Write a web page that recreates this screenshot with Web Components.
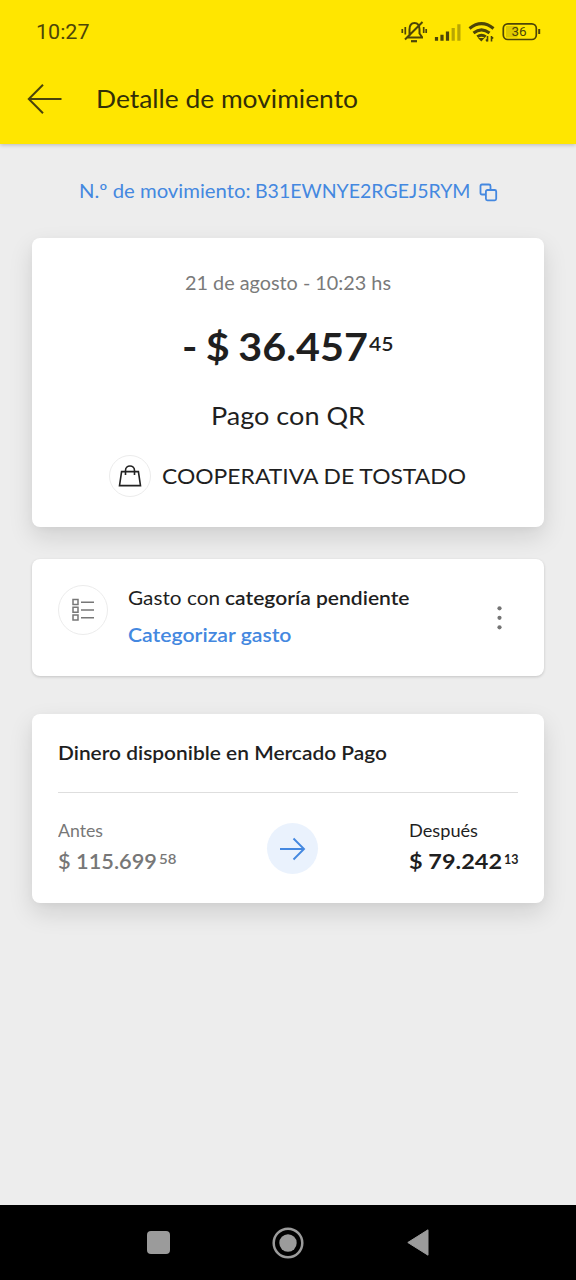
<!DOCTYPE html>
<html lang="es">
<head>
<meta charset="utf-8">
<title>Detalle de movimiento</title>
<style>
body { margin: 0; background: #ededed; font-family: Lato, "Open Sans", sans-serif; color: #1f1f1f; }
</style>
</head>
<body>
<mp-screen></mp-screen>
<script>
const define = (name, html, setup) => {
  const tpl = document.createElement('template');
  tpl.innerHTML = html;
  customElements.define(name, class extends HTMLElement {
    constructor() {
      super();
      this.attachShadow({ mode: 'open' }).appendChild(tpl.content.cloneNode(true));
    }
    connectedCallback() { if (setup) setup(this); }
  });
};

// Single line of text: size, line height, and a measure the glyph widths adapt to.
define('mp-text', `
<style>
:host { display: block; white-space: nowrap; flex: none; }
span { display: inline-block; vertical-align: top; transform-origin: 0 50%; }
</style><span><slot></slot></span>`, el => {
  const w = +el.getAttribute('w');
  const lh = (el.getAttribute('lh') || 24) + 'px';
  el.style.fontSize = el.getAttribute('size') + 'px';
  el.style.lineHeight = lh;
  el.style.height = lh;
  const span = el.shadowRoot.querySelector('span');
  const natural = span.getBoundingClientRect().width;
  if (w && natural) {
    el.style.width = w + 'px';
    span.style.transform = 'scaleX(' + (w / natural).toFixed(4) + ')';
  }
});

define('mp-status-bar', `
<style>
:host { display: flex; height: 64px; align-items: center; padding: 0 35px 0 36px; color: #4d4508; font-family: Roboto, sans-serif; box-sizing: border-box; }
.icons { margin-left: auto; display: flex; align-items: center; }
svg { display: block; }
</style>
<mp-text size="21" w="53.5">10:27</mp-text>
<div class="icons">
<svg width="140" height="28" viewBox="401 17 140 28" fill="none" stroke="#4d4508" stroke-width="2">
  <path d="M407.500 36.500h13M409.500 35v-6.500c0-4 2-6.500 5-6.500 3 0 5 2.500 5 6.500v4l2.500 3.500v.5h-4M405 38.500L422.500 21"/>
  <path d="M411 40.200h6" stroke-width="2.200"/>
  <path d="M405.300 26v7.500M402.300 28v4M423.700 26v6M426.200 28v4" stroke-width="1.700"/>
  <g stroke-width="3.200"><path d="M436.500 36v3.700M442 33.700v6M447.500 30.500v9.200"/><path d="M453.200 27v12.700M458.900 23.300v16.400" opacity=".4"/></g>
  <g stroke-width="3"><path d="M469.500 27.500Q481.500 17.800 493.500 27.500M473.500 32Q481.500 25.700 489.500 32"/><path d="M477.300 35.800Q481.500 32.600 485.700 35.800" /></g>
  <path d="M478 37h6.500l-3.200 3.500z" fill="#4d4508" stroke="none"/>
  <path d="M487.500 35v5.500M491.500 35v5.500M486 38.500l1.500 2M491.500 35.500l1.600 2" stroke-width="1.600"/>
  <rect x="506" y="25" width="11.500" height="11.500" fill="#ddc900" stroke="none"/>
  <rect x="503.300" y="22.800" width="33" height="15.700" rx="4.500" stroke-width="1.700"/>
  <path d="M539.200 28v5" stroke-width="2"/>
  <text x="511.500" y="35.400" font-family="Roboto, sans-serif" font-size="13.500" fill="#4d4508" stroke="none">36</text>
</svg>
</div>`);

define('mp-app-bar', `
<style>
:host { display: flex; height: 80px; align-items: center; padding: 0 27px 11px; box-sizing: border-box; color: #332f08; }
svg { display: block; margin-right: 33px; }
</style>
<svg width="36" height="32" viewBox="0 0 36 32" fill="none" stroke="#4a430b" stroke-width="2"><path d="M34.500 16H2M16 1.800L1.800 16 16 30.200"/></svg>
<mp-text size="24.500" w="262" lh="30"><slot></slot></mp-text>`);

define('mp-header', `
<style>:host { display: block; background: #ffe600; height: 144px; box-shadow: 0 1px 4px rgba(0,0,0,.22); }</style>
<mp-status-bar></mp-status-bar><slot></slot>`);

define('mp-movement-id', `
<style>
:host { display: flex; padding: 35px 0 0 78.500px; height: 59px; color: #4488e0; }
.id { margin-left: 5px; }
svg { display: block; margin: 4px 0 0 8.500px; }
</style>
<mp-text size="19.500" w="171.500">N.º de movimiento:</mp-text><mp-text class="id" size="19.500" w="215.500">B31EWNYE2RGEJ5RYM</mp-text>
<svg width="19" height="19" viewBox="0 0 19 19" fill="none" stroke="#4488e0" stroke-width="1.800"><path d="M6.800 11.500H3Q1.500 11.500 1.500 10V3Q1.500 1.500 3 1.500H10Q11.500 1.500 11.500 3V6.500"/><rect x="6.900" y="7" width="10.300" height="10.300" rx="1.500"/></svg>`);

define('mp-card', `
<style>
:host { display: block; margin: 0 32px; background: #fff; border-radius: 8px; box-sizing: border-box; box-shadow: 0 10px 24px rgba(0,0,0,.12), 0 2px 6px rgba(0,0,0,.03); }
:host([flat]) { box-shadow: 0 1px 3px rgba(0,0,0,.18); }
</style><slot></slot>`);

define('mp-badge', `
<style>
:host { display: flex; width: var(--d); height: var(--d); border: 1.500px solid #ececec; border-radius: 50%; box-sizing: border-box; align-items: center; justify-content: center; flex: none; }
</style><slot></slot>`);

define('mp-summary', `
<style>
:host { display: flex; flex-direction: column; align-items: center; height: 289px; padding-top: 33px; box-sizing: border-box; }
.date { color: #7a7a7a; }
.amount { display: flex; margin-top: 27px; font-weight: 700; }
.whole { word-spacing: -1.500px; }
.cents { margin: 10px 0 0 1px; font-weight: 600; }
.kind { margin-top: 30px; }
.payee { display: flex; align-items: center; margin-top: 25px; height: 42px; gap: 11px; padding-right: 2px; }
mp-badge { --d: 42px; }
svg { display: block; }
</style>
<mp-text class="date" size="19.500" w="206">21 de agosto - 10:23 hs</mp-text>
<div class="amount"><mp-text class="whole" size="39" lh="48" w="186">- $ 36.457</mp-text><mp-text class="cents" size="19" w="24.500">45</mp-text></div>
<mp-text class="kind" size="25" w="154" lh="30">Pago con QR</mp-text>
<div class="payee">
<mp-badge><svg width="24" height="24" viewBox="1 0 24 24" fill="none" stroke="#222" stroke-width="1.600"><path d="M4.600 7.600h16.800l2.100 14H2.500zM8.500 11V6.500c0-6 9-6 9 0V11"/></svg></mp-badge>
<mp-text size="22" w="304" lh="28">COOPERATIVA DE TOSTADO</mp-text>
</div>`);

define('mp-category', `
<style>
:host { display: flex; height: 117px; padding: 26px 40px 0 26px; box-sizing: border-box; }
mp-badge { --d: 50px; margin-right: 20px; }
.line { display: flex; gap: 5px; }
b { font-weight: 600; }
.link { margin-top: 14px; color: #4488e0; font-weight: 600; }
svg { display: block; }
.dots { margin: 21px 0 0 auto; }
</style>
<mp-badge><svg width="24" height="24" viewBox="0 0 24 24" fill="none" stroke="#777" stroke-width="1.500"><path d="M2 1.500h5v5H2zM2 9.300h5v5H2zM2 17h5v5H2zM10 4.200h13M10 12h13M10 19.700h13"/></svg></mp-badge>
<div>
<div class="line"><mp-text size="20" w="92">Gasto con</mp-text><b><mp-text size="20" w="184.500">categoría pendiente</mp-text></b></div>
<mp-text class="link" size="19.500" w="163.500">Categorizar gasto</mp-text>
</div>
<svg class="dots" width="9" height="24" viewBox="0 0 9 24" fill="#747474"><circle cx="4.500" cy="2.300" r="2.100"/><circle cx="4.500" cy="11.800" r="2.100"/><circle cx="4.500" cy="21.300" r="2.100"/></svg>`);

define('mp-balance', `
<style>
:host { display: block; height: 189px; padding: 26px 26px 0; box-sizing: border-box; }
.title { font-weight: 600; }
.row { border-top: 1.500px solid #dedede; margin-top: 28px; padding-top: 28px; display: flex; justify-content: space-between; }
.sum { display: flex; font-weight: 600; margin-top: 6px; }
.after .sum { font-weight: 700; }
.before { color: #777; }
.cents { margin: 2px 0 0 2px; }
.go { width: 51px; height: 51px; border-radius: 50%; background: #eaf2fd; margin: 2px 0 0; display: flex; align-items: center; justify-content: center; }
svg { display: block; }
</style>
<mp-text class="title" size="20" w="329">Dinero disponible en Mercado Pago</mp-text>
<div class="row">
<div class="before"><mp-text size="16.500" w="45" lh="20">Antes</mp-text><div class="sum"><mp-text size="21.500" w="99" lh="28">$ 115.699</mp-text><mp-text class="cents" size="13" w="17.500" lh="20">58</mp-text></div></div>
<div class="go"><svg width="27" height="24" viewBox="0 0 27 24" fill="none" stroke="#4488e0" stroke-width="1.900"><path d="M1 12h24M14.500 1.500L25 12 14.500 22.500"/></svg></div>
<div class="after"><mp-text size="16.500" w="69" lh="20">Después</mp-text><div class="sum"><mp-text size="21.500" w="93" lh="28">$ 79.242</mp-text><mp-text class="cents" size="13" w="14.500" lh="20">13</mp-text></div></div>
</div>`);

define('mp-nav-bar', `
<style>
:host { display: grid; grid-template-columns: repeat(3, 129.500px); justify-content: center; align-items: center; justify-items: center; height: 75px; background: #000; margin-top: auto; }
svg { display: block; }
</style>
<svg width="23" height="23"><rect width="23" height="23" rx="4" fill="#9b9b9b"/></svg>
<svg width="32" height="32" viewBox="0 0 32 32"><circle cx="16" cy="16" r="14.300" fill="none" stroke="#9b9b9b" stroke-width="2.500"/><circle cx="16" cy="16" r="8.700" fill="#9b9b9b"/></svg>
<svg width="22" height="27" viewBox="0 0 22 27"><path d="M.8 13.500L21 .8v25.400z" fill="#9b9b9b" stroke="#9b9b9b" stroke-linejoin="round"/></svg>`);

define('mp-screen', `
<style>
:host { display: flex; flex-direction: column; width: 576px; height: 1280px; overflow: hidden; }
.second { margin-top: 32px; }
.third { margin-top: 38px; }
</style>
<mp-header><mp-app-bar>Detalle de movimiento</mp-app-bar></mp-header>
<mp-movement-id></mp-movement-id>
<mp-card><mp-summary></mp-summary></mp-card>
<mp-card flat class="second"><mp-category></mp-category></mp-card>
<mp-card class="third"><mp-balance></mp-balance></mp-card>
<mp-nav-bar></mp-nav-bar>`);
</script>
</body>
</html>
